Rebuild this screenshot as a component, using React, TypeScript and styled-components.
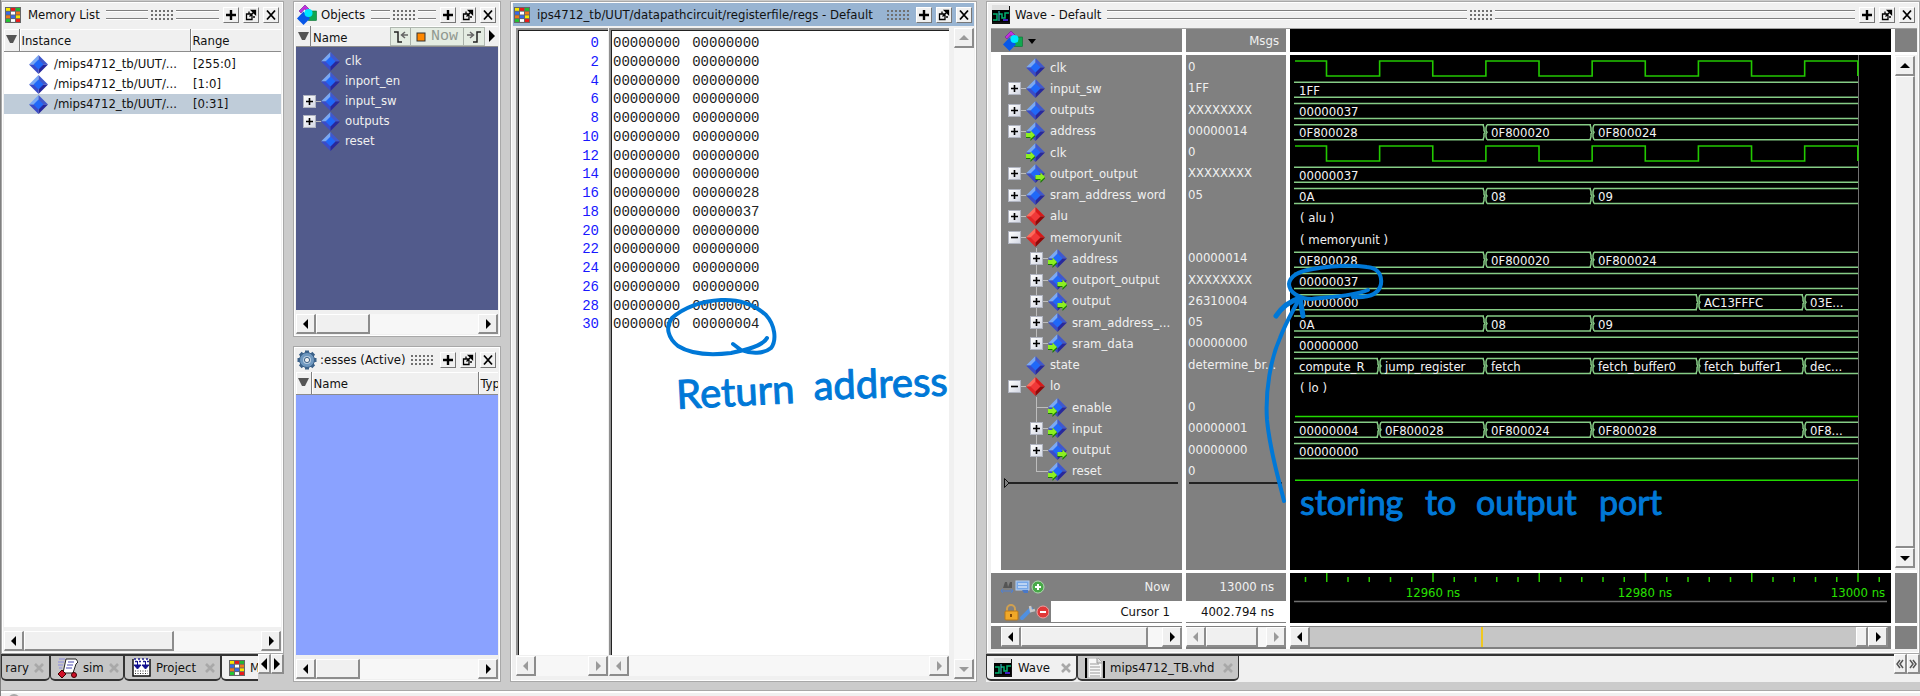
import React from "react";
import styled, { createGlobalStyle, css } from "styled-components";

const UI = `"DejaVu Sans Condensed", "DejaVu Sans", sans-serif`;
const INK = "#0078d7";

const Global = createGlobalStyle`
  *, *::before, *::after { box-sizing: border-box; }
  body { margin: 0; background: #cbcbcb; color: #111; font: 13px/18px ${UI}; }
  button { font: inherit; color: inherit; padding: 0; margin: 0; border: 0; border-radius: 0; }
  ul { list-style: none; margin: 0; padding: 0; }
`;

/* ---------- layout ---------- */
const Shell = styled.div`
  position: relative;
  display: grid;
  grid-template-rows: minmax(0, 1fr) 6px;
  height: 100vh;
  overflow: hidden;
  border-left: 1px solid #808080;
`;
const Workspace = styled.main`
  display: grid;
  grid-template-columns: minmax(0, 283fr) minmax(0, 208fr) minmax(0, 467fr) minmax(0, 934fr);
  gap: 9px;
  padding: 1px 0 8px;
  min-height: 0;
`;
const Column = styled.div<{ $gap?: number }>`
  display: flex;
  flex-direction: column;
  gap: ${(p) => p.$gap ?? 0}px;
  min-width: 0;
  min-height: 0;
`;
const Panel = styled.section<{ $side?: number }>`
  flex: 1 1 0;
  display: flex;
  flex-direction: column;
  min-height: 0;
  min-width: 0;
  padding: 1px 2px 2px ${(p) => p.$side ?? 2}px;
  background: #f0f0f0;
  border: 1px solid #a8a8a8;
  box-shadow: inset 1px 1px #fff, inset -1px -1px #fff;
`;
const StatusBar = styled.footer`
  border-top: 1px solid #a8a8a8;
  background: #f0f0f0;
  box-shadow: inset 0 2px #fff;
  overflow: hidden;
`;
const StatusDot = styled.span`
  display: block;
  width: 12px;
  height: 12px;
  margin: 3px 0 0 7px;
  border-radius: 50%;
  background: #a8a8a8;
`;

/* ---------- title bar ---------- */
const TitleRow = styled.header<{ $active?: boolean }>`
  flex: none;
  display: flex;
  align-items: center;
  height: 23px;
  padding: 0 2px 0 1px;
  background: ${(p) => (p.$active ? "#98b4d2" : "#f0f0f0")};
  svg { flex: none; }
`;
const Title = styled.h2<{ $gap: number; $tight?: boolean }>`
  margin: 0 ${(p) => (p.$tight ? 1 : 6)}px 0 ${(p) => p.$gap}px;
  font-size: 13px;
  font-weight: 400;
  white-space: nowrap;
`;
const Rail = styled.span`
  flex: 1 1 0;
  height: 9px;
  border: solid #808080;
  border-width: 1px 0;
  box-shadow: inset 0 1px #fff, 0 1px #fff;
`;
const Dots = styled.span`
  flex: none;
  width: 22px;
  height: 10px;
  margin: 0 3px;
  background: radial-gradient(circle at 1px 1px, #707070 1px, transparent 1px) 0 0 / 4px 4px;
`;
const TitleGap = styled.span`
  flex: 1 1 0;
`;
const TitleButton = styled.button`
  flex: none;
  display: grid;
  place-items: center;
  width: 16px;
  height: 16px;
  margin-left: 4px;
  background: #f0f0f0;
  border: 1px solid #fff;
  border-right-color: #777;
  border-bottom-color: #777;
`;
function TitleBar(p: { icon: React.ReactNode; text: string; active?: boolean; rails?: boolean; gap?: number }) {
  return (
    <TitleRow $active={p.active}>
      {p.icon}
      <Title $gap={p.gap ?? 7} $tight={!p.rails}>{p.text}</Title>
      {p.rails ? <Rail /> : <TitleGap />}
      <Dots />
      {p.rails && <Rail />}
      <TitleButton aria-label="Zoom">
        <svg width="12" height="12"><path d="M6 1v10M1 6h10" stroke="#000" strokeWidth="2.4" /></svg>
      </TitleButton>
      <TitleButton aria-label="Undock">
        <svg width="12" height="12" fill="none" stroke="#000" strokeWidth="1.3">
          <path d="M1.5 5h5.500v5.500h-5.500zM4 4.500V2.500M8 8h2M4.500 7.500L10 2" /><path d="M6.500 1.500h4v4z" fill="#000" />
        </svg>
      </TitleButton>
      <TitleButton aria-label="Close">
        <svg width="12" height="12"><path d="M2 1.500l8 9M10 1.500l-8 9" stroke="#000" strokeWidth="1.800" /></svg>
      </TitleButton>
    </TitleRow>
  );
}

/* ---------- scroll bars ---------- */
const raised = css`
  background: #f0f0f0;
  border: 1px solid #fff;
  border-right: 2px solid #8c8c8c;
  border-bottom: 2px solid #8c8c8c;
`;
const ScrollTrack = styled.div<{ $vertical?: boolean }>`
  flex: none;
  display: flex;
  flex-direction: ${(p) => (p.$vertical ? "column" : "row")};
  ${(p) => (p.$vertical ? "width: 20px;" : "height: 20px;")}
  background: #f7f7f7;
`;
const ScrollButton = styled.button`
  ${raised}
  flex: none;
  display: grid;
  place-items: center;
  width: 20px;
  height: 20px;
`;
const Thumb = styled.span<{ $grow: number }>`
  ${raised}
  flex: ${(p) => p.$grow} 1 0;
`;
const Free = styled.span<{ $grow: number }>`
  flex: ${(p) => p.$grow} 1 0;
`;
const dirs = { left: "M8 1v10L3 6z", right: "M4 1v10l5-5z", up: "M1 8h10L6 3z", down: "M1 4h10L6 9z" };
function Arrow({ dir, off }: { dir: keyof typeof dirs; off?: boolean }) {
  return (
    <ScrollButton aria-label={`Scroll ${dir}`} disabled={off}>
      <svg width="12" height="12"><path d={dirs[dir]} fill={off ? "#9a9a9a" : "#000"} /></svg>
    </ScrollButton>
  );
}
function Scroll(p: { thumb?: number; free?: number; off?: boolean; vertical?: boolean }) {
  return (
    <ScrollTrack $vertical={p.vertical}>
      <Arrow dir={p.vertical ? "up" : "left"} off={p.off} />
      {p.thumb ? <Thumb $grow={p.thumb} /> : null}
      <Free $grow={p.free ?? 1} />
      <Arrow dir={p.vertical ? "down" : "right"} off={p.off} />
    </ScrollTrack>
  );
}
const ScrollSlot = styled.div`
  flex: none;
  padding-top: 4px;
`;

/* ---------- icons ---------- */
function Diamond({ red, port }: { red?: boolean; port?: "in" | "out" }) {
  const c = red ? ["#ff6a5a", "#d81818", "#e02424", "#900808", "#f03838"] : ["#7aa8f4", "#4058cc", "#3a4cc8", "#28289c", "#2068f8"];
  return (
    <svg width="19" height="19" viewBox="0 0 19 19">
      <path d="M9.500 0L0 9.500h9.500z" fill={c[0]} /><path d="M9.500 0L19 9.500H9.500z" fill={c[1]} />
      <path d="M0 9.500L9.500 19V9.500z" fill={c[2]} /><path d="M19 9.500L9.500 19V9.500z" fill={c[3]} />
      <path d="M9.500 4.500l5 5-5 5-5-5z" fill={c[4]} />
      {port && (
        <g transform={port === "in" ? "translate(-.5 8)" : "translate(9.500 8)"}>
          <path d="M0 4h5V1l5 5-5 5V8H0z" fill="#1c7a08" /><path d="M0 3h5V.5L9.500 5 5 9V7H0z" fill="#8cf020" />
        </g>
      )}
    </svg>
  );
}
function GridIcon() {
  const c = ["#f8e800", "#e81818", "#20b830", "#3868e8", "#fff", "#f07818", "#f07818", "#3868e8", "#f8e800", "#20c830", "#fff", "#f01818"];
  return (
    <svg width="16" height="16" viewBox="0 0 16 16">
      <rect width="16" height="16" fill="#666" />
      {c.map((f, i) => <rect key={i} x={1 + (i % 3) * 5} y={1 + Math.floor(i / 3) * 3.700} width="4" height="2.800" fill={f} />)}
    </svg>
  );
}
function ShapesIcon() {
  return (
    <svg width="20" height="20" viewBox="0 0 20 20">
      <path d="M8 0l6 6h-4L7.500 4 4 8 2 6z" fill="#c030e0" stroke="#701890" strokeWidth=".6" />
      <rect x="11.500" y="6" width="8" height="9.500" fill="#10a850" stroke="#087030" strokeWidth=".6" />
      <path d="M6.500 6.500l6.500 7-6.500 6.500L0 13.500z" fill="#0858e8" /><circle cx="11.500" cy="8" r="4" fill="#00e8ff" />
    </svg>
  );
}
function GearIcon() {
  return (
    <svg width="20" height="20" viewBox="0 0 20 20">
      <g stroke="#3a6088" strokeWidth="4">
        {[0, 45, 90, 135].map((a) => <path key={a} d="M10 .5v19" transform={`rotate(${a} 10 10)`} />)}
      </g>
      <circle cx="10" cy="10" r="7.500" fill="#6f98c0" stroke="#3a6088" /><circle cx="10" cy="10" r="4" fill="#b8cde0" />
      <circle cx="10" cy="10" r="2.600" fill="#f0f0f0" stroke="#3a6088" />
    </svg>
  );
}
function WaveIcon() {
  return (
    <svg width="19" height="19" viewBox="0 0 19 19">
      <path d="M0 1h18v18H0z" fill="#111" /><path d="M0 0h17v6H0z" fill="#e0e0e0" /><path d="M0 5h17v12H0z" fill="#000" />
      <path d="M1 9h4v6H1M7 9h3v4h3V8h4" fill="none" stroke="#00b070" strokeWidth="1.500" />
      <path d="M7 6v10" stroke="#40d0e0" /><path d="M11 15h5" stroke="#4020c0" strokeWidth="2" />
    </svg>
  );
}
function SimIcon() {
  return (
    <svg width="20" height="20" viewBox="0 0 20 20">
      <path d="M1 1h6M0 4h6M0 7h5M1 10h3" stroke="#a0a0d8" strokeWidth="1.500" />
      <path d="M8 1h10l2 3-2 2-3 9H5z" fill="#fff" stroke="#222" /><path d="M10 4h6M9 7h6M8 10h6" stroke="#4848b0" />
      <path d="M4 12l4 4-4 4-4-4z" fill="#d01028" stroke="#400" /><circle cx="16" cy="17" r="2.500" fill="#d01028" stroke="#400" />
    </svg>
  );
}
function ProjectIcon() {
  return (
    <svg width="19" height="19" viewBox="0 0 19 19">
      <path d="M1 1v17h17V1" fill="#fff" stroke="#111" strokeWidth="1.500" />
      <path d="M2 1h15M3 3.500h14" stroke="#202090" strokeWidth="1.500" strokeDasharray="2 2" />
      <path d="M5.500 3v5M13.500 3v5M2 7h7l-3.500 4zM10 7h7l-3.500 4z" fill="#101090" stroke="#101090" />
      <path d="M3 13h13M3 15.500h13" stroke="#333" strokeDasharray="1 1.500" />
    </svg>
  );
}
function FileIcon() {
  return (
    <svg width="20" height="20" viewBox="0 0 20 20">
      <path d="M0 0h2v20H0zM18 3h2v17h-2z" fill="#000" /><path d="M3 0h10l4 4v16H3z" fill="#f8f8f8" stroke="#aaa" />
      <path d="M12 0v5h5" fill="#ddd" stroke="#999" /><path d="M5 6h9M5 9h10M5 12h10M5 15h10M5 18h10" stroke="#999" />
    </svg>
  );
}

/* ---------- column headings and lists ---------- */
const DataTable = styled.table`
  width: 100%;
  border-collapse: collapse;
  table-layout: fixed;
  text-align: left;
`;
const Head = styled.th<{ $w?: number }>`
  ${(p) => (p.$w ? `width: ${p.$w}px;` : "")}
  height: 22px;
  padding: 2px 2px 0;
  font-weight: 400;
  overflow: hidden;
  white-space: nowrap;
  background: #f0f0f0;
  border-bottom: 1px solid #8c8c8c;
  border-right: 1px solid #808080;
  box-shadow: inset 1px 1px #fff;
  &:last-child { border-right: 0; }
`;
const SortHead = styled(Head)`
  width: 15px;
  padding: 0;
  text-align: center;
  svg { display: block; margin: auto; }
`;
const SortMark = () => <svg width="11" height="9"><path d="M0 0h11L7 8H4z" fill="#555" /></svg>;
const Body = styled.div<{ $bg: string }>`
  flex: 1 1 0;
  min-height: 0;
  overflow: hidden;
  background: ${(p) => p.$bg};
`;
const MemRow = styled.tr<{ $on?: boolean }>`
  background: ${(p) => (p.$on ? "#bfccd9" : "#fff")};
  td { height: 20px; padding: 0 3px; white-space: nowrap; overflow: hidden; }
`;
const MemName = styled.span`
  display: flex;
  align-items: center;
  gap: 6px;
  padding-left: 7px;
  svg { flex: none; }
`;
const Spacer = styled.div<{ $h: number }>`
  flex: none;
  height: ${(p) => p.$h}px;
`;
const ObjectHeader = styled.div`
  flex: none;
  display: flex;
  align-items: stretch;
  height: 21px;
  border-bottom: 1px solid #8c8c8c;
  box-shadow: inset 0 1px #fff;
`;
const SortCell = styled.span`
  display: grid;
  place-items: center;
  width: 15px;
  border-right: 1px solid #808080;
`;
const ObjectTitle = styled.span`
  flex: 1;
  padding: 3px 2px 0;
`;
const TimeTools = styled.span`
  display: flex;
  height: 19px;
  margin: 1px 4px 0 0;
  background: #e4ece2;
  border: 1px solid #b0b8b0;
`;
const TimeTool = styled.button<{ $w: number }>`
  display: flex;
  align-items: center;
  justify-content: center;
  gap: 5px;
  width: ${(p) => p.$w}px;
  background: transparent;
  border-right: 1px solid #a8b0a8;
  color: #909890;
  font: 15px/16px "Liberation Mono", monospace;
  &:last-child { border-right: 0; }
`;
const More = styled.button`
  display: flex;
  align-items: center;
  width: 9px;
  background: transparent;
`;

/* ---------- signal tree ---------- */
const SignalItem = styled.li<{ $level: number }>`
  display: flex;
  align-items: center;
  min-width: 0;
  padding-left: ${(p) => 7 + 22 * p.$level}px;
  color: #f0f0f0;
  white-space: nowrap;
  svg { flex: none; }
`;
const Guide = styled.span<{ $level: number; $leaf: boolean; $last?: boolean }>`
  flex: none;
  display: flex;
  align-items: center;
  width: 18px;
  height: 100%;
  ${(p) => {
    const line = "linear-gradient(#bdbdbd, #bdbdbd)";
    const tall = `${line} 6px 0 / 1px ${p.$last ? "50%" : "100%"} no-repeat`;
    const wide = `${line} 6px 50% / 12px 1px no-repeat`;
    if (p.$level) return `background: ${tall}, ${wide};`;
    return p.$leaf ? "" : `background: ${wide};`;
  }}
`;
const Toggle = styled.button`
  display: grid;
  place-items: center;
  width: 13px;
  height: 13px;
  background: linear-gradient(135deg, #fff, #d4d8e4);
  border: 1px solid #b0b4c0;
`;
const SignalName = styled.span`
  margin-left: 5px;
`;
type Wave = { clk?: boolean; low?: boolean; group?: string; bus?: [number, string][] };
type Sig = { n: string; v?: string; box?: "+" | "-"; lvl?: number; red?: boolean; port?: "in" | "out"; last?: boolean; wave?: Wave };
function Signal({ s }: { s: Sig }) {
  return (
    <SignalItem $level={s.lvl ?? 0}>
      <Guide $level={s.lvl ?? 0} $leaf={!s.box} $last={s.last}>
        {s.box && (
          <Toggle aria-label={s.box === "+" ? `Expand ${s.n}` : `Collapse ${s.n}`}>
            <svg width="9" height="9"><path d={s.box === "+" ? "M1 4.500h7M4.500 1v7" : "M1 4.500h7"} stroke="#000" strokeWidth="1.600" /></svg>
          </Toggle>
        )}
      </Guide>
      <Diamond red={s.red} port={s.port} />
      <SignalName>{s.n}</SignalName>
    </SignalItem>
  );
}
const ObjectList = styled.ul`
  display: grid;
  grid-auto-rows: 20px;
  padding-top: 4px;
`;

/* ---------- tabs ---------- */
const TabBar = styled.nav<{ $fill?: boolean }>`
  flex: none;
  display: flex;
  height: 28px;
  padding-bottom: 1px;
  background: ${(p) => (p.$fill ? "#f0f0f0" : "#cbcbcb")};
  overflow: hidden;
`;
const TabList = styled.div`
  flex: 1;
  display: flex;
  min-width: 0;
  overflow: hidden;
  border-top: 2px solid #333;
`;
const Tab = styled.button<{ $w: number; $on?: boolean; $end?: boolean }>`
  flex: none;
  display: flex;
  align-items: center;
  justify-content: ${(p) => (p.$end ? "flex-end" : "flex-start")};
  gap: 5px;
  width: ${(p) => p.$w}px;
  padding: 0 5px 0 7px;
  background: ${(p) => (p.$on ? "#f0f0f0" : "#c6c6c6")};
  border: solid #333;
  border-width: 0 1px 2px;
  border-radius: 0 0 5px 5px;
  white-space: nowrap;
  overflow: hidden;
  svg { flex: none; }
`;
const TabClose = styled.span`
  margin-left: auto;
  display: flex;
`;
const Cross = () => <TabClose><svg width="10" height="10"><path d="M1 1l8 8M9 1L1 9" stroke="#a8a8a8" strokeWidth="2.600" /></svg></TabClose>;
const TabArrow = styled.button`
  ${raised}
  flex: none;
  display: grid;
  place-items: center;
  width: 13px;
  height: 20px;
`;

/* ---------- memory dump ---------- */
const Dump = styled.div`
  flex: 1 1 0;
  min-height: 0;
  display: grid;
  grid-template-columns: 92px minmax(0, 1fr) 24px;
  column-gap: 1px;
  margin-top: 2px;
  padding-left: 3px;
`;
const DumpColumn = styled(Column)`
  padding-bottom: 3px;
`;
const DumpPane = styled.div<{ $right?: boolean }>`
  flex: 1 1 0;
  min-height: 0;
  margin-bottom: 1px;
  padding: 4px 9px 0 2px;
  background: #fff;
  border: solid #909090;
  border-width: 2px 0 0 2px;
  box-shadow: inset 1px 1px #222;
  font: 14px/18px "Liberation Mono", monospace;
  color: ${(p) => (p.$right ? "#1818ff" : "#222")};
  text-align: ${(p) => (p.$right ? "right" : "left")};
`;
const DumpRows = styled.div`
  display: grid;
  grid-template-rows: repeat(16, 1fr);
  height: 300px;
`;
const Words = styled.span`
  display: flex;
  gap: 12px;
`;
const DumpScroll = styled.div`
  display: flex;
  justify-content: flex-end;
  min-height: 0;
`;

/* ---------- wave viewer ---------- */
const WaveGrid = styled.div`
  flex: 1 1 0;
  min-height: 0;
  display: grid;
  grid-template-columns: 191px 100px minmax(0, 1fr) 22px;
  grid-template-rows: 23px minmax(0, 1fr) 50px 23px;
  gap: 3px 4px;
  margin: 2px 0 2px;
  background: #fff;
  border-top: 1px solid #a0a0a0;
`;
const Cell = styled.div<{ $black?: boolean; $strip?: boolean }>`
  min-width: 0;
  overflow: hidden;
  color: #f0f0f0;
  background: ${(p) => (p.$black ? "#000" : "#808080")};
  ${(p) => (p.$strip ? "border-left: 10px solid #fff;" : "")}
`;
const HeadCell = styled(Cell)<{ $end?: boolean }>`
  display: flex;
  align-items: center;
  justify-content: ${(p) => (p.$end ? "flex-end" : "flex-start")};
  gap: 5px;
  padding: 1px 7px 0 12px;
`;
const SignalList = styled.ul`
  display: grid;
  grid-template-rows: repeat(20, 1fr);
  height: 427px;
  padding-top: 2px;
`;
const ValueItem = styled.li`
  padding: 1px 4px 0 2px;
  white-space: nowrap;
  overflow: hidden;
  text-overflow: ellipsis;
`;
const DropMark = styled.div`
  height: 2px;
  margin: 0 4px 0 3px;
  background: #222;
`;
const InsertHandle = styled.svg`
  position: absolute;
  width: 6px;
  height: 10px;
  margin-top: -4px;
`;
const InfoCell = styled(Cell)`
  display: grid;
  grid-template-rows: 28px 21px;
`;
const InfoRow = styled.div<{ $white?: boolean }>`
  display: flex;
  align-items: center;
  padding-left: 10px;
  background: ${(p) => (p.$white ? "linear-gradient(#fff, #fff) 60px 0 no-repeat" : "none")};
  color: ${(p) => (p.$white ? "#111" : "#f0f0f0")};
`;
const InfoValue = styled(InfoRow)`
  justify-content: flex-end;
  padding-right: 12px;
  ${(p) => (p.$white ? "background: #fff;" : "")}
`;
const InfoLabel = styled.span`
  margin-left: auto;
  padding-right: 12px;
`;
const FootCell = styled(Cell)<{ $pad?: number }>`
  padding: 1px 0 2px ${(p) => p.$pad ?? 0}px;
`;
const TimeTrack = styled(ScrollTrack)`
  margin: 0 3px 0 0;
  background: linear-gradient(#f0c820, #f0c820) 32% 0 / 2px 100% no-repeat #c6c6c6;
`;
const SideScroll = styled.div`
  display: flex;
  padding: 1px 2px 2px 0;
  background: #f0f0f0;
`;
const SmallThumb = styled.span`
  ${raised}
  width: 12px;
`;
const WaveSvg = styled.svg`
  display: block;
  width: 100%;
  height: 100%;
  font: 13px ${UI};
`;
const Ink = styled.svg`
  position: absolute;
  inset: 0;
  width: 100%;
  height: 100%;
  pointer-events: none;
  font: 34px Lato, sans-serif;
`;

/* x positions of the state changes on the time axis */
const T = [5, 89, 195, 302, 408, 514];
const addr: [number, string][] = [[0, "0F800028"], [2, "0F800020"], [3, "0F800024"]];
const word: [number, string][] = [[0, "0A"], [2, "08"], [3, "09"]];
const one = (t: string): Wave => ({ bus: [[0, t]] });
const signals: Sig[] = [
  { n: "clk", v: "0", wave: { clk: true } },
  { n: "input_sw", v: "1FF", box: "+", wave: one("1FF") },
  { n: "outputs", v: "XXXXXXXX", box: "+", wave: one("00000037") },
  { n: "address", v: "00000014", box: "+", port: "in", wave: { bus: addr } },
  { n: "clk", v: "0", port: "in", wave: { clk: true } },
  { n: "outport_output", v: "XXXXXXXX", box: "+", port: "out", wave: one("00000037") },
  { n: "sram_address_word", v: "05", box: "+", wave: { bus: word } },
  { n: "alu", box: "+", red: true, wave: { group: "( alu )" } },
  { n: "memoryunit", box: "-", red: true, wave: { group: "( memoryunit )" } },
  { n: "address", v: "00000014", box: "+", lvl: 1, port: "in", wave: { bus: addr } },
  { n: "outport_output", v: "XXXXXXXX", box: "+", lvl: 1, port: "out", wave: one("00000037") },
  { n: "output", v: "26310004", box: "+", lvl: 1, port: "out", wave: { bus: [[0, "00000000"], [4, "AC13FFFC"], [5, "03E..."]] } },
  { n: "sram_address_...", v: "05", box: "+", lvl: 1, wave: { bus: word } },
  { n: "sram_data", v: "00000000", box: "+", lvl: 1, port: "in", last: true, wave: one("00000000") },
  { n: "state", v: "determine_br...", wave: { bus: [[0, "compute_R"], [1, "jump_register"], [2, "fetch"], [3, "fetch_buffer0"], [4, "fetch_buffer1"], [5, "dec..."]] } },
  { n: "lo", box: "-", red: true, wave: { group: "( lo )" } },
  { n: "enable", v: "0", lvl: 1, port: "in", wave: { low: true } },
  { n: "input", v: "00000001", box: "+", lvl: 1, port: "in", wave: { bus: [[0, "00000004"], [1, "0F800028"], [2, "0F800024"], [3, "0F800028"], [5, "0F8..."]] } },
  { n: "output", v: "00000000", box: "+", lvl: 1, port: "out", wave: one("00000000") },
  { n: "reset", v: "0", lvl: 1, port: "in", last: true, wave: { low: true } },
];
const END = 568;
const PITCH = 21.25;

function Trace({ w, row }: { w: Wave; row: number }) {
  const mid = 13.5 + row * PITCH;
  const top = mid - 7.5;
  const low = mid + 7.5;
  if (w.clk) {
    let d = `M5 ${top}`;
    for (let k = 0; k < 11; k++) d += `H${36.5 + k * 53.13}V${k % 2 ? top : low}`;
    return <path d={d} fill="none" stroke="#22c800" strokeWidth="1.600" />;
  }
  if (w.low) return <path d={`M5 ${low + 0.5}H${END}`} stroke="#22d800" strokeWidth="1.600" />;
  if (w.group) return <text x="10" y={mid + 5} fill="#f0f0f0">{w.group}</text>;
  return (
    <g>
      {w.bus!.map(([t, label], i, all) => {
        const a = i ? T[t] + 2 : 4;
        const next = all[i + 1];
        const b = next ? T[next[0]] - 1 : END;
        return (
          <g key={i}>
            <path
              d={[
                `M${a} ${top}H${b}M${a} ${low}H${b}`,
                next ? `M${b - 1} ${top}l1 3v3l1 1.500-1 1.500v3l-1 3` : "",
                i ? `M${a} ${top}l-1 3v3l1 1.500-1 1.500v3l1 3` : "",
              ].join("")}
              fill="none" stroke="#86cc86" strokeWidth="1.500"
            />
            <text x={i ? T[t] + 6 : 9} y={mid + 5} fill="#f4f4f4">{label}</text>
          </g>
        );
      })}
    </g>
  );
}

function Ruler() {
  const ticks = Array.from({ length: 28 }, (_, k) => k - 1);
  return (
    <WaveSvg fill="#28e000">
      {ticks.map((k) => (
        <path key={k} d={`M${END - k * PITCH} ${k % 5 === 0 ? 0 : 4}V9`} stroke="#28c800" strokeWidth="1.500" />
      ))}
      <g textAnchor="middle">
        <text x="143" y="24">12960 ns</text>
        <text x="355" y="24">12980 ns</text>
        <text x="568" y="24">13000 ns</text>
      </g>
      <path d="M4 28.500H597" stroke="#707070" strokeWidth="1.500" />
    </WaveSvg>
  );
}

export default function App() {
  return (
    <Shell>
      <Global />
      <Workspace>
        <Column>
          <Panel>
            <TitleBar icon={<GridIcon />} text="Memory List" rails />
            <Spacer $h={3} />
            <Body $bg="#fff">
              <DataTable>
                <thead>
                  <tr><SortHead aria-label="Sort"><SortMark /></SortHead><Head>Instance</Head><Head $w={91}>Range</Head></tr>
                </thead>
                <tbody>
                  <tr><td colSpan={3} height="3" /></tr>
                  {["[255:0]", "[1:0]", "[0:31]"].map((r, i) => (
                    <MemRow key={r} $on={i === 2}>
                      <td />
                      <td><MemName><Diamond />/mips4712_tb/UUT/...</MemName></td>
                      <td>{r}</td>
                    </MemRow>
                  ))}
                </tbody>
              </DataTable>
            </Body>
            <ScrollSlot><Scroll thumb={150} free={88} /></ScrollSlot>
          </Panel>
          <TabBar>
            <TabList>
              <Tab $w={49} $end>rary<Cross /></Tab>
              <Tab $w={74}><SimIcon />sim<Cross /></Tab>
              <Tab $w={97}><ProjectIcon />Project<Cross /></Tab>
              <Tab $w={80} $on><GridIcon />Memory</Tab>
            </TabList>
            <TabArrow aria-label="Previous tabs"><svg width="8" height="12"><path d="M7 0v12L1 6z" /></svg></TabArrow>
            <TabArrow aria-label="Next tabs"><svg width="8" height="12"><path d="M1 0v12l6-6z" /></svg></TabArrow>
          </TabBar>
        </Column>

        <Column $gap={9}>
          <Panel>
            <TitleBar icon={<ShapesIcon />} text="Objects" rails gap={4} />
            <ObjectHeader>
              <SortCell><SortMark /></SortCell>
              <ObjectTitle>Name</ObjectTitle>
              <TimeTools>
                <TimeTool $w={20} aria-label="Previous event">
                  <svg width="16" height="14" fill="none" stroke="#222" strokeWidth="1.500"><path d="M1 2h4v10h4" /><path d="M15 5H9M12 2L8.500 5 12 8" stroke="#666" /></svg>
                </TimeTool>
                <TimeTool $w={53}><svg width="10" height="10"><rect x="1" y="1" width="8" height="8" fill="#ff8800" stroke="#333" /></svg>Now</TimeTool>
                <TimeTool $w={20} aria-label="Next event">
                  <svg width="16" height="14" fill="none" stroke="#222" strokeWidth="1.500"><path d="M15 2h-4v10H7" /><path d="M1 5h6M4 2l3.500 3L4 8" stroke="#666" /></svg>
                </TimeTool>
              </TimeTools>
              <More aria-label="More"><svg width="6" height="12"><path d="M0 0v12l6-6z" /></svg></More>
            </ObjectHeader>
            <Body $bg="#525b8c">
              <ObjectList>
                <Signal s={{ n: "clk" }} />
                <Signal s={{ n: "inport_en" }} />
                <Signal s={{ n: "input_sw", box: "+" }} />
                <Signal s={{ n: "outputs", box: "+" }} />
                <Signal s={{ n: "reset" }} />
              </ObjectList>
            </Body>
            <ScrollSlot><Scroll thumb={52} free={110} /></ScrollSlot>
          </Panel>
          <Panel>
            <TitleBar icon={<GearIcon />} text=":esses (Active)" gap={3} />
            <Spacer $h={1} />
            <Body $bg="#8aa2ff">
              <DataTable>
                <thead>
                  <tr><SortHead aria-label="Sort"><SortMark /></SortHead><Head>Name</Head><Head $w={20}>Type</Head></tr>
                </thead>
              </DataTable>
            </Body>
            <ScrollSlot><Scroll thumb={42} free={121} /></ScrollSlot>
          </Panel>
        </Column>

        <Column>
          <Panel>
            <TitleBar active icon={<GridIcon />} text="ips4712_tb/UUT/datapathcircuit/registerfile/regs - Default" />
            <Dump>
              <DumpColumn>
                <DumpPane $right>
                  <DumpRows>{Array.from({ length: 16 }, (_, i) => <span key={i}>{i * 2}</span>)}</DumpRows>
                </DumpPane>
                <Scroll off />
              </DumpColumn>
              <DumpColumn>
                <DumpPane>
                  <DumpRows>
                    {Array.from({ length: 16 }, (_, i) => (
                      <Words key={i}>
                        <span>00000000</span>
                        <span>{({ 8: "00000028", 9: "00000037", 15: "00000004" } as Record<number, string>)[i] ?? "00000000"}</span>
                      </Words>
                    ))}
                  </DumpRows>
                </DumpPane>
                <Scroll off />
              </DumpColumn>
              <DumpScroll><Scroll vertical off /></DumpScroll>
            </Dump>
          </Panel>
        </Column>

        <Column>
          <Panel $side={4}>
            <TitleBar icon={<WaveIcon />} text="Wave - Default" rails gap={4} />
            <WaveGrid>
              <HeadCell><ShapesIcon /><svg width="8" height="5"><path d="M0 0h8L4 5z" /></svg></HeadCell>
              <HeadCell $end>Msgs</HeadCell>
              <Cell $black />
              <Cell />

              <Cell $strip>
                <SignalList>{signals.map((s, i) => <Signal key={i} s={s} />)}</SignalList>
                <DropMark>
                  <InsertHandle><path d="M.500 .500v9L5 5z" fill="#808080" stroke="#111" /></InsertHandle>
                </DropMark>
              </Cell>
              <Cell>
                <SignalList>{signals.map((s, i) => <ValueItem key={i}>{s.v}</ValueItem>)}</SignalList>
                <DropMark />
              </Cell>
              <Cell $black>
                <WaveSvg>
                  <path d={`M${END + 0.5} 0V2000`} stroke="#707070" />
                  {signals.map((s, i) => <Trace key={i} w={s.wave!} row={i} />)}
                </WaveSvg>
              </Cell>
              <SideScroll><Scroll vertical thumb={1} free={0} /></SideScroll>

              <InfoCell>
                <InfoRow>
                  <svg width="44" height="16" viewBox="0 0 44 16">
                    <path d="M2 9l2-6h2l1 5 2-5h2v6z" fill="#555" /><path d="M0 12h12M2 10l-2 2 2 2M10 10l2 2-2 2" stroke="#5080d0" fill="none" />
                    <rect x="15" y="2" width="13" height="9" fill="#78a8e8" stroke="#b8d0f0" /><path d="M17 5h9M17 8h9" stroke="#fff" /><path d="M21 11h6v3h-4z" fill="#4878c8" />
                    <circle cx="37" cy="8" r="6" fill="#48a848" stroke="#b0d8b0" /><path d="M37 5v6M34 8h6" stroke="#fff" strokeWidth="2" />
                  </svg>
                  <InfoLabel>Now</InfoLabel>
                </InfoRow>
                <InfoRow $white>
                  <svg width="48" height="18" viewBox="0 0 48 18">
                    <path d="M6 9V6a4 4 0 018 0v3" fill="none" stroke="#d0a050" strokeWidth="2" /><rect x="4" y="8" width="13" height="9" rx="1" fill="#f0a828" stroke="#b87818" /><path d="M10 11v3" stroke="#804808" strokeWidth="2" />
                    <path d="M21 15l9-9" stroke="#5090e0" strokeWidth="4" strokeLinecap="round" /><path d="M29 3l1 5 4-1" fill="none" stroke="#c8c8c8" strokeWidth="2.500" />
                    <circle cx="42" cy="9" r="6" fill="#e03838" stroke="#f0a0a0" /><path d="M39 9h6" stroke="#fff" strokeWidth="2" />
                  </svg>
                  <InfoLabel>Cursor 1</InfoLabel>
                </InfoRow>
              </InfoCell>
              <InfoCell>
                <InfoValue>13000 ns</InfoValue>
                <InfoValue $white>4002.794 ns</InfoValue>
              </InfoCell>
              <Cell $black><Ruler /></Cell>
              <Cell />

              <FootCell $pad={10}><Scroll thumb={126} free={14} /></FootCell>
              <FootCell><Scroll thumb={49} free={8} off /></FootCell>
              <FootCell>
                <TimeTrack>
                  <Arrow dir="left" /><Free $grow={1} /><SmallThumb /><Arrow dir="right" />
                </TimeTrack>
              </FootCell>
              <Cell />
            </WaveGrid>
          </Panel>
          <TabBar $fill>
            <TabList>
              <Tab $w={91} $on><WaveIcon />Wave<Cross /></Tab>
              <Tab $w={162}><FileIcon />mips4712_TB.vhd<Cross /></Tab>
            </TabList>
            <TabArrow aria-label="Previous tabs"><svg width="8" height="10" fill="none" stroke="#555" strokeWidth="1.500"><path d="M4 1L1 5l3 4M7 1L4 5l3 4" /></svg></TabArrow>
            <TabArrow aria-label="Next tabs"><svg width="8" height="10" fill="none" stroke="#555" strokeWidth="1.500"><path d="M1 1l3 4-3 4M4 1l3 4-3 4" /></svg></TabArrow>
          </TabBar>
        </Column>
      </Workspace>
      <StatusBar><StatusDot /></StatusBar>

      <Ink fill="none" stroke={INK} strokeWidth="5" strokeLinecap="round" strokeLinejoin="round">
        <path d="M766 338C762 346 745 350 730 353C705 356 688 353 677 346C667 338 664 327 671 318C682 308 700 301 720 300C740 299 754 305 765 315C774 325 776 340 770 348C763 354 750 354 740 350L732 344" strokeWidth="4" />
        <path d="M1367 290C1350 297 1325 297 1311 299C1298 299 1288 292 1288 284C1289 275 1299 271 1312 269C1330 266 1352 265 1366 267C1378 268 1381 276 1380 284C1378 294 1369 298 1352 297" strokeWidth="4" />
        <path d="M1283 501C1278 480 1269 452 1266 420C1264 390 1270 358 1279 338C1285 322 1292 311 1298 299" strokeWidth="4" />
        <path d="M1275 316C1281 307 1289 301 1299 298L1302 316" />
        <g fill={INK} strokeWidth="1">
          <text x="676" y="409" fontSize="40" transform="rotate(-3 676 409)">Return</text>
          <text x="813" y="400" fontSize="40" transform="rotate(-2 813 400)">address</text>
          <text y="515"><tspan x="1299">storing</tspan><tspan x="1424">to</tspan><tspan x="1475">output</tspan><tspan x="1598">port</tspan></text>
        </g>
      </Ink>
    </Shell>
  );
}
